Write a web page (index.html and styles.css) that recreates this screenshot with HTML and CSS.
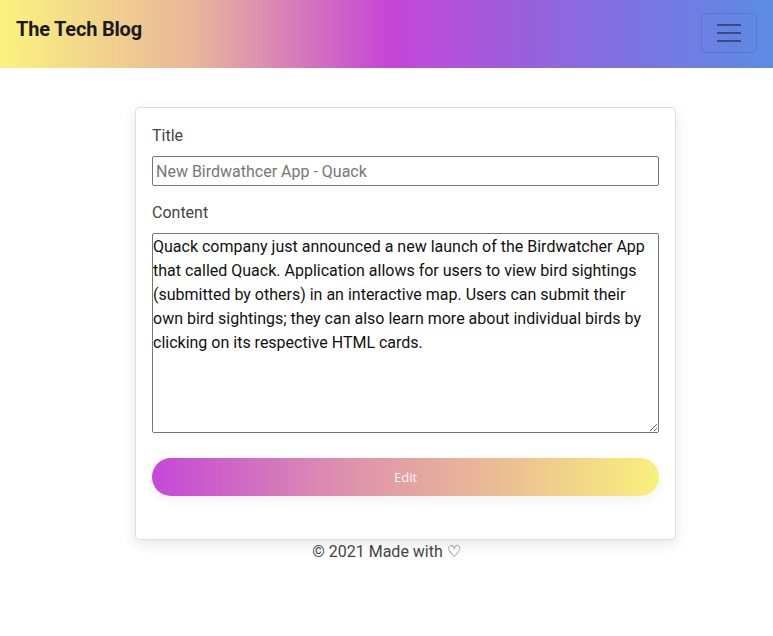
FILE: index.html
```html
<!DOCTYPE html>
<html>
<head>
<meta charset="utf-8">
<link rel="stylesheet" href="styles.css">
</head>
<body>
<nav class="navbar">
  <span class="brand">The Tech Blog</span>
  <button class="toggler" type="button" aria-label="menu">
    <svg width="26" height="20" viewBox="0 0 26 20"><path d="M1 2h24M1 10h24M1 18h24" stroke="#3b4a86" stroke-width="2.2" fill="none"/></svg>
  </button>
</nav>
<main class="wrap">
  <form class="card">
    <label class="lbl" for="t">Title</label>
    <input id="t" class="field" type="text" placeholder="New Birdwathcer App - Quack">
    <label class="lbl" for="c">Content</label>
    <textarea id="c" class="area">Quack company just announced a new launch of the Birdwatcher App that called Quack. Application allows for users to view bird sightings (submitted by others) in an interactive map. Users can submit their own bird sightings; they can also learn more about individual birds by clicking on its respective HTML cards.</textarea>
    <button class="edit" type="button">Edit</button>
  </form>
</main>
<footer class="foot">© 2021 Made with ♡</footer>
</body>
</html>
```
FILE: styles.css
```css
html, body { margin: 0; padding: 0; background: #fff; }
body { font-family: Roboto, "Liberation Sans", sans-serif; color: #444; }
.navbar {
  height: 68px;
  box-sizing: border-box;
  padding: 0 16px;
  display: flex;
  align-items: center;
  justify-content: space-between;
  background: linear-gradient(90deg, #fbf27e 0%, #e9b79a 25%, #c646d6 50%, #8a6ade 75%, #5b8ce4 100%);
}
.brand { font-size: 20px; font-weight: 700; color: #1a1a1a; letter-spacing: -0.2px; margin-top: -10px; }
.toggler {
  width: 56px; height: 40px;
  margin-top: -2px;
  border: 1px solid rgba(0,0,0,0.1);
  border-radius: 5px;
  background: transparent;
  display: flex; align-items: center; justify-content: center;
  padding: 0;
}
.wrap { padding: 39px 97px 0 135px; }
.card {
  display: flex; flex-direction: column;
  box-sizing: border-box;
  width: 541px;
  padding: 16px 16px 43px;
  border: 1px solid #dedede;
  border-radius: 4px;
  background: #fff;
  box-shadow: 0 4px 14px rgba(0,0,0,0.1);
}
.lbl { font-size: 16px; line-height: 24px; color: #444; margin-bottom: 8px; padding-top: 1px; margin-top: -1px; }
.field {
  height: 30px; box-sizing: border-box;
  border: 1px solid #767676; border-radius: 2px;
  padding: 0 3px;
  font: 16px Roboto, "Liberation Sans", sans-serif;
  color: #222;
  margin: 0 0 15px;
}
.field::placeholder { color: #777; }
.area {
  height: 200px; box-sizing: border-box;
  border: 1px solid #767676; border-radius: 2px;
  padding: 1px 0 0 0;
  margin: 0 0 25px;
  font: 16px/24px Roboto, "Liberation Sans", sans-serif;
  color: #111;
  resize: vertical;
}
.edit {
  height: 38px;
  margin: 0;
  border: none;
  border-radius: 19px;
  background: linear-gradient(90deg, #c547d8 0%, #dc8cb0 35%, #ecbf93 70%, #faf07c 100%);
  color: rgba(255,255,255,0.95);
  font: 13px "Open Sans", "Noto Sans", sans-serif;
  box-shadow: 0 4px 12px rgba(0,0,0,0.06);
}
.foot { text-align: center; font-size: 16px; color: #444; line-height: 24px; }
```
